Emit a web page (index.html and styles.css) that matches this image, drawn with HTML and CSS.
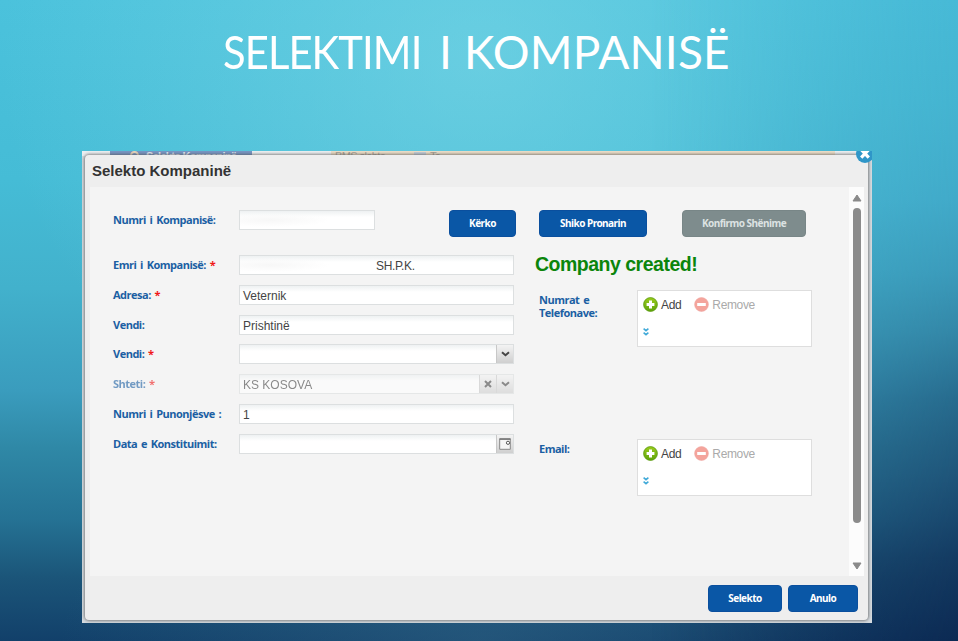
FILE: index.html
```html
<!DOCTYPE html>
<html lang="sq">
<head>
<meta charset="utf-8">
<title>Selektimi i Kompanisë</title>
<link rel="stylesheet" href="styles.css">
</head>
<body>
<svg width="0" height="0" class="defs">
  <defs>
    <linearGradient id="gGreen" x1="0" y1="0" x2="0" y2="1"><stop offset="0" stop-color="#9acb1c"/><stop offset="1" stop-color="#5fa30a"/></linearGradient>
    <symbol id="add" viewBox="0 0 15 15"><circle cx="7.5" cy="7.5" r="6.9" fill="url(#gGreen)" stroke="#5a9a10" stroke-width=".8"/><path d="M7.5 3.6v7.8M3.6 7.5h7.8" stroke="#fff" stroke-width="3"/></symbol>
    <symbol id="remove" viewBox="0 0 15 15"><circle cx="7.5" cy="7.5" r="6.9" fill="#f4a49c" stroke="#efa8a2" stroke-width=".6"/><path d="M3.2 7.5h8.6" stroke="#fff" stroke-width="3"/></symbol>
    <symbol id="more" viewBox="0 0 6 8"><path d="M.6.7 3 2.7 5.4.7M.6 4.7 3 6.7 5.4 4.7" fill="none" stroke="#3fa9d8" stroke-width="1.5"/></symbol>
    <symbol id="chev" viewBox="0 0 9 6"><path d="M1 1.2 4.5 4.2 8 1.2" fill="none" stroke="currentColor" stroke-width="2"/></symbol>
  </defs>
</svg>
<h1 class="slide-title"><span class="w1">SELEKTIMI</span> <span class="w2">I</span> <span class="w3">KOMPANISË</span></h1>
<div class="shot">
  <div class="behind">
    <span class="behind-tab"><i></i>Selekto Kompaninë</span>
    <span class="behind-bar">BMS slehte <b></b> Te</span>
  </div>
  <div class="dialog">
    <header class="dialog-head">Selekto Kompaninë</header>
    <main class="dialog-body">
      <div class="form">
        <div class="search">
          <label>Numri i Kompanisë:</label>
          <div class="input short smudge"></div>
          <button class="btn kerko">Kërko</button>
          <button class="btn shiko">Shiko Pronarin</button>
          <button class="btn konfirmo">Konfirmo Shënime</button>
        </div>
        <div class="columns">
          <div class="fields">
            <div class="row"><label>Emri i Kompanisë: <em>*</em></label><div class="input smudge company">SH.P.K.</div></div>
            <div class="row"><label>Adresa: <em>*</em></label><div class="input">Veternik</div></div>
            <div class="row"><label>Vendi:</label><div class="input">Prishtinë</div></div>
            <div class="row"><label>Vendi: <em>*</em></label><div class="input"><span class="trigger"><svg width="9" height="6"><use href="#chev"/></svg></span></div></div>
            <div class="row disabled"><label>Shteti: <em>*</em></label><div class="input">KS KOSOVA<span class="trigger"><svg width="8" height="8" viewBox="0 0 8 8"><path d="M1 1l6 6M7 1 1 7" stroke="currentColor" stroke-width="2"/></svg></span><span class="trigger"><svg width="9" height="6"><use href="#chev"/></svg></span></div></div>
            <div class="row"><label>Numri i Punonjësve :</label><div class="input">1</div></div>
            <div class="row"><label>Data e Konstituimit:</label><div class="input"><span class="trigger"><svg width="12" height="12" viewBox="0 0 12 12"><path d="M.7.7h10.6v10.6H.7z" fill="#f5f5f5" stroke="#888" stroke-width="1"/><path d="M.5 1.2h11" stroke="#777" stroke-width="1.4"/><circle cx="9" cy="4.8" r="1.6" fill="#fff" stroke="#555"/></svg></span></div></div>
          </div>
          <div class="contacts">
            <p class="status">Company created!</p>
            <div class="contact">
              <label>Numrat e Telefonave:</label>
              <div class="box">
                <div class="actions"><svg width="15" height="15"><use href="#add"/></svg><span class="add">Add</span><svg width="15" height="15"><use href="#remove"/></svg><span class="remove">Remove</span></div>
                <svg class="more" width="6" height="8"><use href="#more"/></svg>
              </div>
            </div>
            <div class="contact">
              <label>Email:</label>
              <div class="box">
                <div class="actions"><svg width="15" height="15"><use href="#add"/></svg><span class="add">Add</span><svg width="15" height="15"><use href="#remove"/></svg><span class="remove">Remove</span></div>
                <svg class="more" width="6" height="8"><use href="#more"/></svg>
              </div>
            </div>
          </div>
        </div>
      </div>
      <div class="scrollbar">
        <svg width="10" height="8" viewBox="0 0 10 8"><path d="M5 1 9 7H1z" fill="#8a8a8a" stroke="#8a8a8a" stroke-linejoin="round"/></svg>
        <div class="thumb"></div>
        <svg width="10" height="8" viewBox="0 0 10 8"><path d="M5 7 1 1h8z" fill="#8a8a8a" stroke="#8a8a8a" stroke-linejoin="round"/></svg>
      </div>
    </main>
    <footer class="dialog-foot"><button class="btn selekto">Selekto</button><button class="btn anulo">Anulo</button></footer>
  </div>
  <svg class="close" width="18" height="18" viewBox="0 0 18 18"><circle cx="9" cy="9" r="9" fill="#2f96c8"/><path d="M5.2 4.6l7.6 8M12.8 4.6l-7.6 8" stroke="#fff" stroke-width="3.2"/></svg>
</div>
</body>
</html>
```
FILE: styles.css
```css
* { box-sizing: border-box; }
body {
  margin: 0;
  width: 958px;
  height: 641px;
  overflow: hidden;
  position: relative;
  z-index: 0;
  font-family: "Liberation Sans", Arial, sans-serif;
  background:
    radial-gradient(ellipse 480px 420px at 480px 60px, rgba(125, 215, 230, .6), rgba(125, 215, 230, 0)),
    radial-gradient(ellipse 420px 200px at 480px 641px, rgba(60, 115, 145, .4), rgba(60, 115, 145, 0)),
    linear-gradient(180deg, #4bc2dc 0%, #45bcd6 28%, #42b1cc 45%, #3a9cbd 61%, #2f88a6 70%, #257294 81%, #1b5579 90%, #12406a 100%);
}
/* Darker right side of the slide */
body::before {
  content: "";
  position: absolute;
  inset: 0;
  z-index: -1;
  background: linear-gradient(180deg, #47b8d5 0%, #44b2cf 16%, #41a7c7 31%, #3a97b8 42%, #3180a1 52%, #246386 62%, #1c4b71 75%, #12345c 87%, #0b264f 100%);
  -webkit-mask-image: linear-gradient(90deg, transparent 68%, #000 106%);
  mask-image: linear-gradient(90deg, transparent 68%, #000 106%);
}
.defs { position: absolute; }
.slide-title {
  margin: 0;
  padding: 23px 0 0 223px;
  height: 151px;
  display: flex;
  font: 400 46px/58px Lato, sans-serif;
  letter-spacing: -1px;
  color: #fff;
}
.w1 { width: 216px; transform: scaleX(.907); transform-origin: left; }
.w2 { width: 25px; }
.w3 { letter-spacing: .2px; }
.shot {
  position: relative;
  width: 790px;
  height: 472px;
  margin-left: 82px;
  padding: 4px 4px 3px 3px;
  overflow: hidden;
  background: #d5dbe0;
}
.behind {
  position: absolute;
  left: 0;
  top: 0;
  width: 100%;
  height: 5px;
  overflow: hidden;
  background: #eceff1;
  font: 700 11px/11px "Liberation Sans", sans-serif;
}
.behind-tab { position: absolute; left: 28px; top: 0; width: 142px; height: 5px; padding-left: 36px; background: #7896c4; color: #e4eaf4; letter-spacing: -.7px; white-space: nowrap; overflow: hidden; }
.behind-tab i { position: absolute; left: 20px; top: 0; width: 9px; height: 9px; border-radius: 50%; border: 2px solid #ead7bd; }
.behind-bar { position: absolute; left: 249px; top: 0; width: 504px; height: 5px; padding-left: 4px; background: #ecdec8; color: #a7a096; font-weight: 400; letter-spacing: -.6px; overflow: hidden; }
.behind-bar b { display: inline-block; width: 12px; height: 8px; margin: 0 2px 0 26px; background: #c4ced8; }
.dialog {
  position: relative;
  width: 783px;
  height: 465px;
  display: flex;
  flex-direction: column;
  border-radius: 4px;
  background: #eee;
  box-shadow: 0 0 3px 1px rgba(80, 80, 80, .65);
}
.dialog-head { height: 32px; padding-left: 7px; font-size: 15px; line-height: 31px; font-weight: 700; color: #333; }
.dialog-body { height: 389px; margin: 0 4px 0 5px; display: flex; background: #f4f4f4; }
.form { flex: 1; padding: 23px 0 0 23px; }
label { width: 126px; flex: none; color: #1b5fa3; font: 700 11px/13px "Open Sans", sans-serif; letter-spacing: -.5px; word-spacing: 1.4px; }
label em { color: #f01818; font-style: normal; }
.search { display: flex; height: 45px; align-items: flex-start; }
.search label { line-height: 20px; }
.input {
  flex: 1;
  height: 20px;
  display: flex;
  border: 1px solid #dcdfe0;
  background: linear-gradient(#eef1f2, #fff 6px);
  padding-left: 3px;
  font-size: 12px;
  line-height: 20px;
  color: #444;
}
.input.short { flex: none; width: 136px; }
.smudge { background: radial-gradient(ellipse 60px 7px at 30px 9px, #f7f7f7, rgba(250, 250, 250, 0)), linear-gradient(#eef1f2, #fff 6px); }
.company { padding-left: 136px; letter-spacing: -.35px; }
.btn {
  height: 27px;
  border: 1px solid #0a4f9e;
  border-radius: 4px;
  padding: 0 0 2px;
  background: #0a57a6;
  color: #fff;
  font: 700 10px/14px "Noto Sans", sans-serif;
  letter-spacing: -.52px;
}
.kerko { width: 67px; margin-left: 74px; }
.shiko { width: 108px; margin-left: 23px; }
.konfirmo { width: 124px; margin-left: 35px; background: #7e8c8d; border-color: #788687; color: #dce2e2; }
.columns { display: flex; gap: 21px; }
.fields { width: 401px; display: flex; flex-direction: column; gap: 9.8px; }
.row { display: flex; height: 20px; }
.row label { line-height: 20px; }
.disabled { opacity: .6; }
.trigger {
  width: 17px;
  margin-left: auto;
  display: flex;
  align-items: center;
  justify-content: center;
  border-left: 1px solid #c8c8c8;
  background: linear-gradient(#f3f3f3, #cfcfcf);
  color: #444;
}
.trigger + .trigger { margin-left: 0; }
.status { margin: 0; height: 35px; font-size: 19.5px; line-height: 19px; letter-spacing: -.5px; font-weight: 700; color: #0b850b; }
.contact { display: flex; height: 149px; padding-left: 4px; }
.contact label { width: 98px; padding: 3px 20px 0 0; }
.box { width: 175px; height: 57px; border: 1px solid #dedede; background: #fff; padding: 6px 5px; }
.actions { display: flex; align-items: center; height: 15px; font-size: 12px; letter-spacing: -.35px; }
.actions svg { flex: none; }
.add { margin: 0 13px 0 3px; color: #444; }
.remove { margin-left: 3px; color: #aaa; }
.more { display: block; margin-top: 16px; }
.scrollbar { width: 15px; padding: 7px 0 6px; display: flex; flex-direction: column; align-items: center; background: #fcfcfc; }
.thumb { width: 8px; height: 315px; margin: 6px 0 auto; border-radius: 4px; background: #8b8b8b; }
.dialog-foot { height: 44px; display: flex; justify-content: flex-end; gap: 6px; padding: 9px 10px 0 0; }
.selekto { width: 74px; }
.anulo { width: 70px; }
.close { position: absolute; right: -2px; top: -6px; }
```
